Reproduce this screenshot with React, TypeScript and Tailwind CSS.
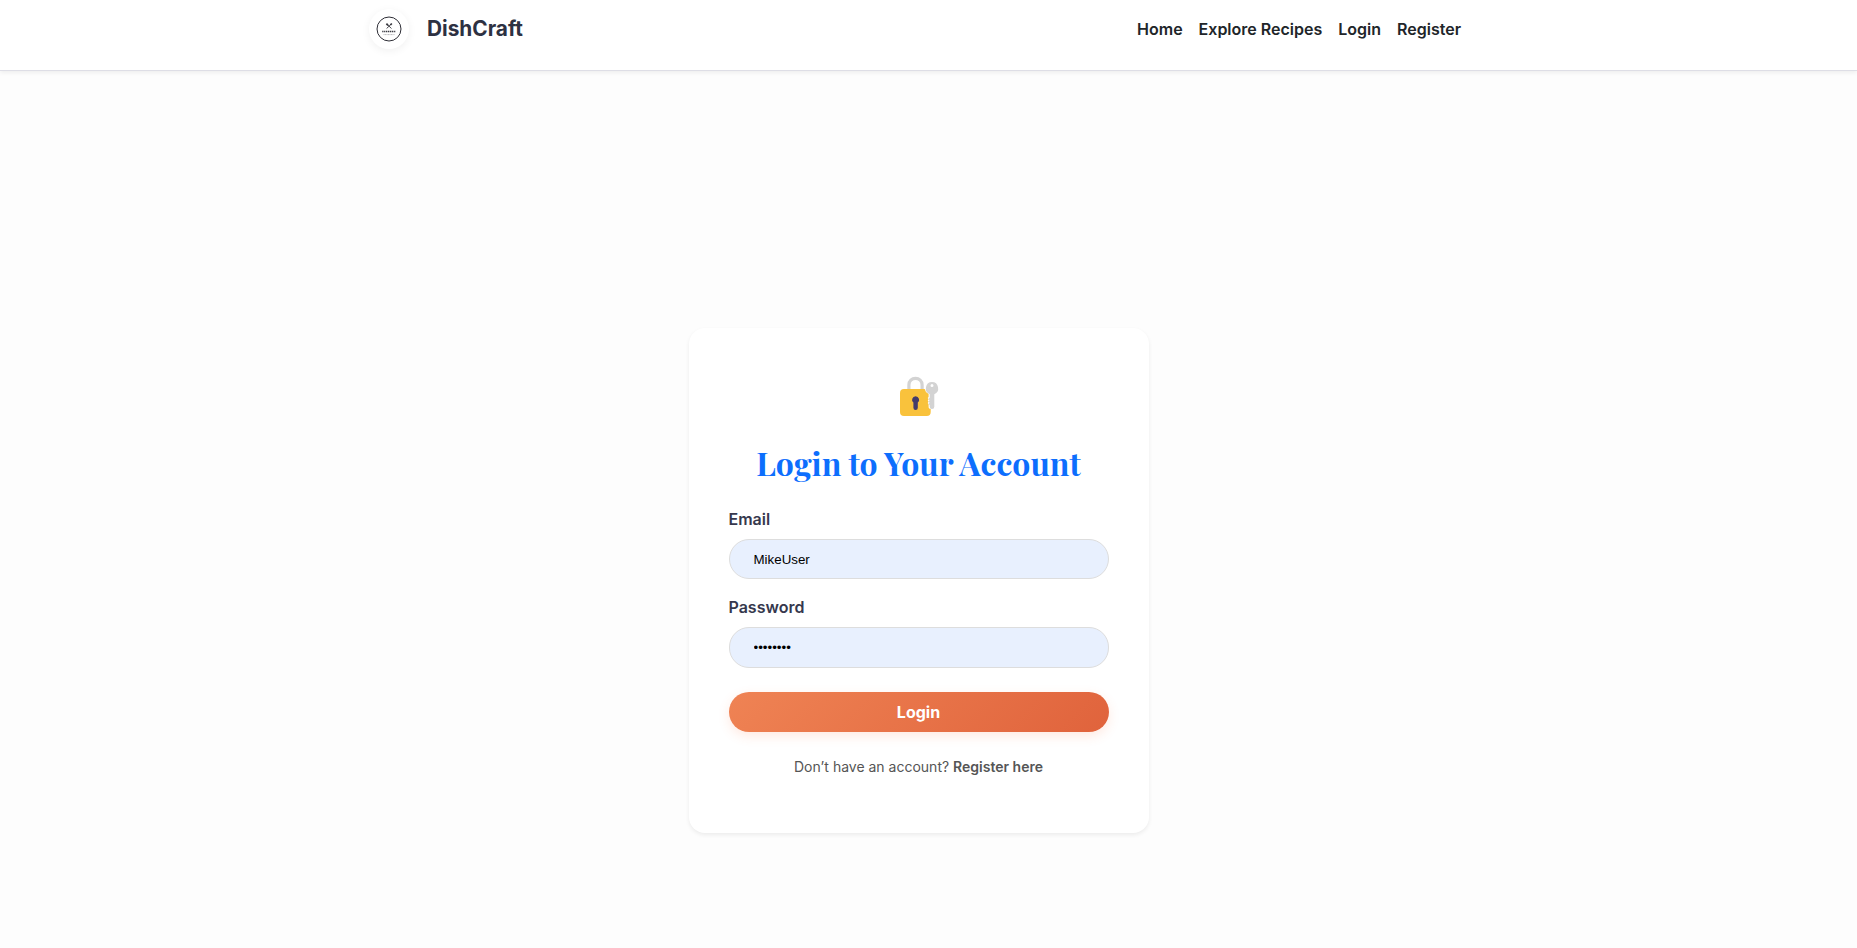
const navLinks = ["Home", "Explore Recipes", "Login", "Register"];

function BrandMark() {
  return (
    <span className="flex size-10 items-center justify-center rounded-full bg-white shadow-[0_2px_8px_rgba(0,0,0,0.06)]">
      <svg viewBox="0 0 40 40" className="size-10" fill="none">
        <circle cx="20" cy="20" r="12" stroke="#2d2d35" strokeWidth="1" />
        <path d="M18.2 15.3l4.2 4.2M22 15.3l-4.4 4.2" stroke="#34343b" strokeWidth="0.9" />
        <path d="M17.4 14.6l1.6 1.7M21.4 16l1.4-1.5" stroke="#34343b" strokeWidth="1.7" />
        <path d="M13.2 22.6h13.6" stroke="#3c3c44" strokeWidth="1.5" strokeDasharray="1.3 .6" />
        <path d="M14.5 25.6h11" stroke="#8b8b91" strokeWidth="0.6" strokeDasharray="1.1 .4" />
      </svg>
    </span>
  );
}

function LockIcon() {
  return (
    <svg viewBox="0 0 48 48" className="size-12" fill="none">
      <path d="M13.9 18v-5.1a6.6 6.6 0 0 1 13.2 0V18" stroke="#d3d3d3" strokeWidth="3.2" />
      <path d="M9 17h20.7a6.8 6.8 0 0 0 3.9 5v3l-.9 1 .9 1.2-.9 1.2.9 1.3-.9 1.3.9 1.2V35c0 1.2.9 2 2.1 2v3a4 4 0 0 1-4 4H9a4 4 0 0 1-4-4V21a4 4 0 0 1 4-4z" fill="#f9c23c" />
      <path fillRule="evenodd" clipRule="evenodd" d="M37 10.1a6.3 6.3 0 0 1 2.3 12.1v12.6a2.3 2.3 0 0 1-4.6 0V33l-1.2-1 1.2-1.2-1.2-1.3 1.2-1.3-1.2-1.3 1.2-1.2v-3.5A6.3 6.3 0 0 1 37 10.1zm0 1.9a1.5 1.5 0 1 0 0 3 1.5 1.5 0 0 0 0-3z" fill="#d3d3d3" />
      <path d="M20.6 24.2a3.6 3.6 0 0 1 2.2 6.4v5.2a2.2 2.2 0 0 1-4.4 0v-5.2a3.6 3.6 0 0 1 2.2-6.4z" fill="#433b6b" />
    </svg>
  );
}

function Field({ label, type, value, height }: { label: string; type: string; value: string; height: string }) {
  return (
    <label className="mb-4 block">
      <span className="mb-2 block text-base leading-6 font-semibold text-[#36384d]">{label}</span>
      <input
        type={type}
        defaultValue={value}
        className={`${height} block w-full rounded-[20px] border border-[#dddddd] bg-[#e8f0fe] px-6 font-['Liberation_Sans',Arial,sans-serif] text-[13.333px] text-black outline-none`}
      />
    </label>
  );
}

export default function App() {
  return (
    <div className="flex h-[948px] flex-col overflow-hidden bg-[#fdfdfd] font-['Inter',sans-serif]">
      <header className="flex h-[71px] shrink-0 justify-center border-b border-[#dedee6] bg-white pt-[9px] pr-[27px] shadow-[0_2px_4px_rgba(0,0,0,0.06)]">
        <div className="flex h-10 w-[1092px] items-center justify-between">
          <a className="flex items-center gap-[18px]">
            <BrandMark />
            <span className="text-[20.8px] font-bold text-[#2d3142]">DishCraft</span>
          </a>
          <nav className="flex gap-4 text-base font-semibold text-[#212529]">
            {navLinks.map((item) => (
              <a key={item}>{item}</a>
            ))}
          </nav>
        </div>
      </header>
      <main className="flex flex-1 justify-center pt-[257px] pr-5">
        <section className="h-[505px] w-[460px] rounded-2xl bg-white px-10 pt-11 shadow-[0_2px_4px_rgba(0,0,0,0.07)]">
          <div className="flex justify-center">
            <LockIcon />
          </div>
          <h1 className="mt-[23px] mb-6 text-center font-['Playfair_Display','Liberation_Serif',serif] text-[32px] leading-10 font-bold whitespace-nowrap text-[#0d6efd]">
            Login to Your Account
          </h1>
          <form>
            <Field label="Email" type="text" value="MikeUser" height="h-10" />
            <Field label="Password" type="password" value="password" height="h-[41px]" />
            <button
              type="button"
              className="mt-6 block h-10 w-full rounded-full bg-[linear-gradient(135deg,#ef8354,#e0633c)] text-base font-bold text-white shadow-[0_4px_12px_rgba(255,107,53,0.15)]"
            >
              Login
            </button>
          </form>
          <p className="mt-6 text-center text-sm leading-[21px] text-[#555555]">
            Don’t have an account? <a className="font-semibold">Register here</a>
          </p>
        </section>
      </main>
    </div>
  );
}
